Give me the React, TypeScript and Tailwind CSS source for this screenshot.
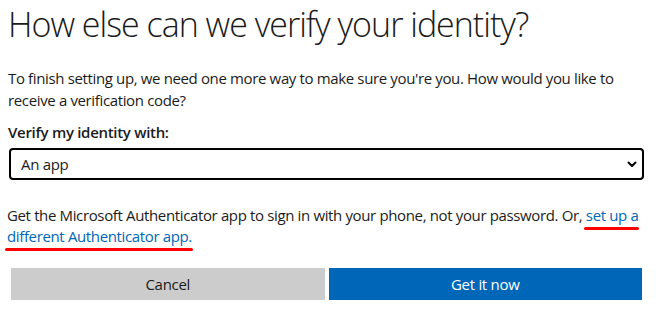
import React from 'react'

const font = { fontFamily: '"Open Sans", "Noto Sans", Arial, sans-serif' }

function Chevron() {
  return (
    <svg className="w-[10px] h-[7px]" viewBox="0 0 10 7" fill="none">
      <path d="M1.5 1.5 L5 5 L8.5 1.5" stroke="#000" strokeWidth={2} strokeLinecap="round" strokeLinejoin="round" />
    </svg>
  )
}

function Marked({ children }: { children: React.ReactNode }) {
  return (
    <span className="relative">
      {children}
      <span className="absolute -left-[2px] -right-[1px] bottom-[-5px] h-[3px] rounded-full bg-[#ff0000]" />
    </span>
  )
}

export default function App() {
  return (
    <div className="w-[660px] h-[313px] bg-white text-[#1b1b1b] overflow-hidden" style={font}>
      <div className="pl-2 pr-4">
        <h1 className="text-[34px] font-light leading-[44px] pt-[2px] tracking-[-1px] whitespace-nowrap">
          How else can we verify your identity?
        </h1>

        <p className="mt-[21px] text-[15px] leading-[22px] tracking-[-0.36px] whitespace-nowrap">
          To finish setting up, we need one more way to make sure you're you. How would you like to
          <br />
          receive a verification code?
        </p>

        <label className="block mt-[11px] text-[15px] font-semibold leading-[21px] tracking-[-0.3px]">
          Verify my identity with:
        </label>

        <div className="relative mt-[5px] ml-px h-8 border-2 border-black rounded-[4px] flex items-center pl-[10px] pr-[5px]">
          <span className="flex-1 text-[15px] tracking-[-0.3px]">An app</span>
          <Chevron />
        </div>

        <p className="mt-[25px] -ml-[1px] text-[15px] leading-[21px] tracking-[-0.36px] whitespace-nowrap">
          Get the Microsoft Authenticator app to sign in with your phone, not your password. Or,{' '}
          <a className="text-[#0067b8]">
            <Marked>set up a</Marked>
            <br />
            <Marked>different Authenticator app.</Marked>
          </a>
        </p>

        <div className="mt-[21px] ml-[3px] mr-[2px] flex gap-1">
          <button className="flex-1 h-8 bg-[#cccccc] text-[15px] text-[#1b1b1b] tracking-[-0.3px]">Cancel</button>
          <button className="flex-1 h-8 bg-[#0067b8] text-[15px] text-white tracking-[-0.3px]">Get it now</button>
        </div>
      </div>
    </div>
  )
}
